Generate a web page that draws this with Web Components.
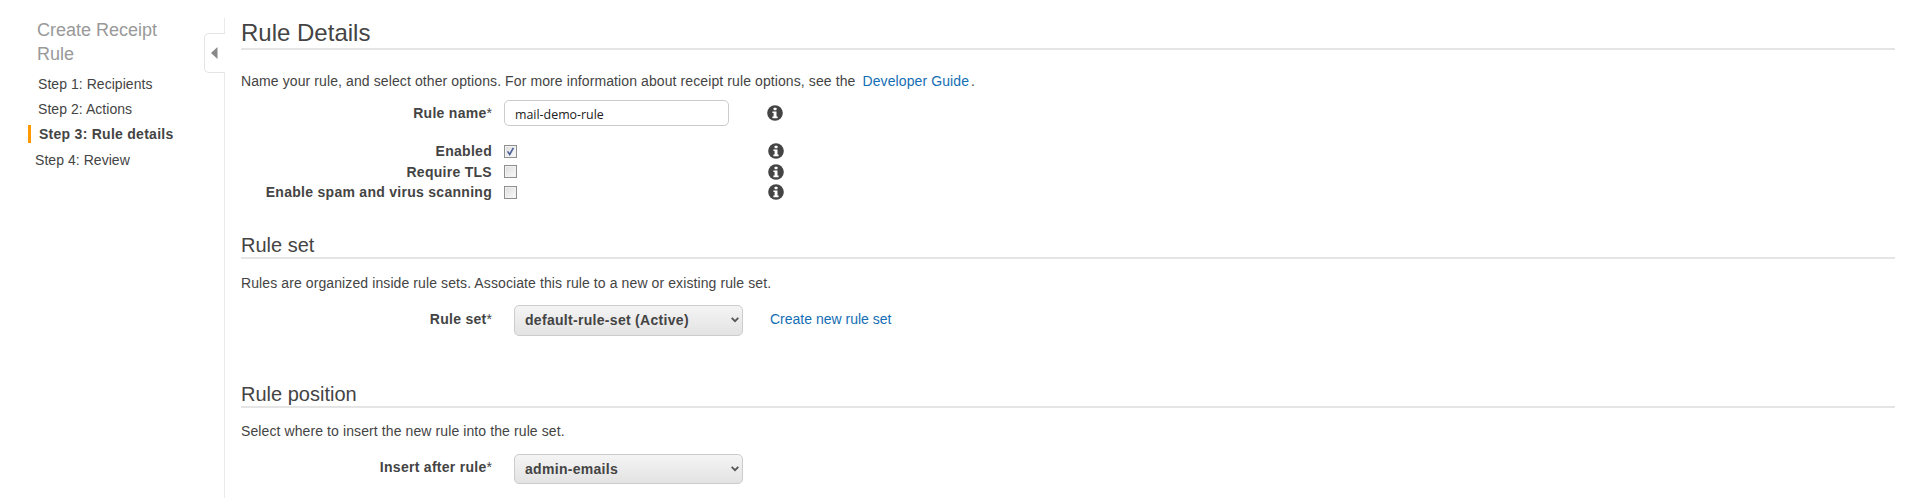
<!DOCTYPE html>
<html>
<head>
<meta charset="utf-8">
<style>
  html, body { margin: 0; height: 100%; background: #fff; overflow: hidden; }
  body { font-family: "Liberation Sans", Arial, sans-serif; font-size: 14px; color: #444; }
</style>
</head>
<body>
<template id="info-tpl">
  <style>
    :host { display: block; width: 16px; height: 16px; }
    svg { display: block; }
  </style>
  <svg width="16" height="16" viewBox="0 0 16 16">
    <circle cx="8" cy="8" r="7.8" fill="#444"/>
    <rect x="6.6" y="2.8" width="2.9" height="2.5" rx=".5" fill="#fff"/>
    <path d="M5.4 6.4h4.1v5.2h1.1v1.7H5.4v-1.7h1.2V8.1H5.4z" fill="#fff"/>
  </svg>
</template>

<script>
class WizardNav extends HTMLElement {
  constructor() {
    super();
    this.attachShadow({ mode: "open" });
    this.shadowRoot.innerHTML = `
      <style>
      :host {
        display: block;
        width: 224px;
        flex: none;
        box-sizing: border-box;
        padding-top: 18px;
      }
      .title {
        margin: 0 0 0 37px;
        width: 140px;
        font-size: 18px;
        font-weight: normal;
        line-height: 24px;
        color: #999;
      }
      .steps {
        list-style: none;
        margin: 9px 0 0 0;
        padding: 0;
      }
      .step {
        height: 18px;
        line-height: 18px;
        margin-bottom: 7.2px;
        padding-left: 38px;
        letter-spacing: .05px;
      }
      .step.current {
        font-weight: bold;
        letter-spacing: .27px;
        padding-left: 39px;
        position: relative;
      }
      .step.current::before {
        content: "";
        position: absolute;
        left: 28px;
        top: 0;
        width: 3px;
        height: 18px;
        background: #f90;
      }
      .step.last { padding-left: 35px; }
      </style>
      <h2 class="title">Create Receipt Rule</h2>
      <ul class="steps">
        <li class="step">Step 1: Recipients</li>
        <li class="step">Step 2: Actions</li>
        <li class="step current">Step 3: Rule details</li>
        <li class="step last">Step 4: Review</li>
      </ul>
    `;
  }
}

class NavToggle extends HTMLElement {
  constructor() {
    super();
    this.attachShadow({ mode: "open" });
    this.shadowRoot.innerHTML = `
      <style>
      :host {
        position: absolute;
        left: 204px;
        top: 33px;
        width: 21px;
        height: 40px;
        box-sizing: border-box;
        background: #fff;
        border: 1px solid #e4e4e4;
        border-right: 0;
        border-radius: 5px 0 0 5px;
        display: flex;
        align-items: center;
        justify-content: center;
      }
      svg { display: block; margin-left: -1px; }
      </style>
      <svg width="7" height="12" viewBox="0 0 7 12"><path d="M6.5 0v12L0 6z" fill="#888"/></svg>
    `;
  }
}

class FormSection extends HTMLElement {
  constructor() {
    super();
    this.attachShadow({ mode: "open" });
    this.shadowRoot.innerHTML = `
      <style>
      :host { display: block; }
      h3 {
        margin: 0;
        font-weight: normal;
        color: #444;
        font-size: var(--head-size, 20px);
        line-height: var(--head-line, 24px);
        padding-bottom: var(--head-pad, 0);
        border-bottom: 2px solid #e5e5e5;
      }
      p {
        margin: 0;
        padding-top: var(--desc-pad, 15px);
        line-height: 18px;
        letter-spacing: .1px;
      }
      </style>
      <h3></h3>
      <p><slot name="desc"></slot></p>
      <slot></slot>
    `;
  }
  connectedCallback() {
    this.shadowRoot.querySelector("h3").textContent = this.getAttribute("heading");
  }
}

class FormRow extends HTMLElement {
  constructor() {
    super();
    this.attachShadow({ mode: "open" });
    this.shadowRoot.innerHTML = `
      <style>
      :host {
        display: grid;
        grid-template-columns: 251px 1fr;
        column-gap: 12px;
        align-items: center;
      }
      .label {
        font-weight: bold;
        letter-spacing: .28px;
        text-align: right;
        white-space: nowrap;
        margin-top: var(--label-shift, 0);
      }
      .req { font-weight: normal; letter-spacing: 0; }
      .control { display: flex; align-items: center; }
      </style>
      <div class="label"><span class="text"></span><span class="req"></span></div>
      <div class="control"><slot></slot></div>
    `;
  }
  connectedCallback() {
    this.shadowRoot.querySelector(".text").textContent = this.getAttribute("label");
    if (this.hasAttribute("required")) this.shadowRoot.querySelector(".req").textContent = "*";
  }
}

class InfoIcon extends HTMLElement {
  constructor() {
    super();
    this.attachShadow({ mode: "open" });
    this.shadowRoot.appendChild(document.getElementById("info-tpl").content.cloneNode(true));
  }
}

class TextField extends HTMLElement {
  constructor() {
    super();
    this.attachShadow({ mode: "open" });
    this.shadowRoot.innerHTML = `
      <style>
      :host { display: block; width: 225px; height: 26px; flex: none; }
      input {
        display: block;
        width: 100%;
        height: 100%;
        box-sizing: border-box;
        border: 1px solid #ccc;
        border-radius: 5px;
        padding: 2px 10px 0;
        font: 12.4px "Open Sans", "Liberation Sans", sans-serif;
        color: #222;
        outline: 0;
      }
      </style>
      <input type="text">
    `;
  }
  connectedCallback() {
    this.shadowRoot.querySelector("input").setAttribute("value", this.getAttribute("value"));
  }
}

class CheckBox extends HTMLElement {
  constructor() {
    super();
    this.attachShadow({ mode: "open" });
    this.shadowRoot.innerHTML = `
      <style>
      :host {
        display: block;
        width: 13px;
        height: 13px;
        box-sizing: border-box;
        flex: none;
        border: 1px solid #8e8f8f;
        background: linear-gradient(135deg, #dcdcdc, #fbfbfb);
        box-shadow: inset 0 0 0 1px #f2f2f2;
      }
      svg { display: block; }
      </style>
      <svg width="11" height="11" viewBox="0 0 11 11"></svg>
    `;
  }
  connectedCallback() {
    if (this.hasAttribute("checked")) {
      this.shadowRoot.querySelector("svg").innerHTML =
        '<path d="M2.6 5.4l2.1 3L8.4 1.9" fill="none" stroke="#4a5f97" stroke-width="1.6"/>';
    }
  }
}

class SelectField extends HTMLElement {
  constructor() {
    super();
    this.attachShadow({ mode: "open" });
    this.shadowRoot.innerHTML = `
      <style>
      :host { display: block; position: relative; width: 229px; flex: none; }
      select {
        display: block;
        appearance: none;
        width: 100%;
        height: 100%;
        box-sizing: border-box;
        border: 1px solid #ccc;
        border-radius: 5px;
        padding: 0 0 0 10px;
        background: linear-gradient(#f4f4f4, #e3e3e3);
        font: bold 14px "Liberation Sans", sans-serif;
        letter-spacing: .3px;
        color: #444;
      }
      svg { position: absolute; right: 4px; top: 50%; margin-top: -3px; }
      </style>
      <select><option></option></select>
      <svg width="8" height="6" viewBox="0 0 8 6"><path d="M.7 .8L4 4.2 7.3 .8" fill="none" stroke="#555" stroke-width="1.8"/></svg>
    `;
  }
  connectedCallback() {
    this.shadowRoot.querySelector("option").textContent = this.getAttribute("value");
  }
}

class ReceiptRulePage extends HTMLElement {
  constructor() {
    super();
    this.attachShadow({ mode: "open" });
    this.shadowRoot.innerHTML = `
      <style>
      :host { display: flex; position: relative; height: 498px; overflow: hidden; }
      a { color: #146eb4; text-decoration: none; }
      .content {
        flex: 1;
        min-width: 0;
        margin-top: 18px;
        border-left: 1px solid #eaeaea;
        padding: 0 24px 0 16px;
      }
      .details { --head-size: 24px; --head-line: 30px; --desc-pad: 22px; }
      .guide { margin-left: 3px; margin-right: 2px; }
      .name-row { margin-top: 10px; }
      .name-row, .check-row { grid-template-columns: 251px 225px 1fr; }
      .checks { margin-top: 15px; display: grid; }
      .check-row { height: 20.6px; }
      .tip { margin-left: 38px; }
      .tip-wide { margin-left: 251px; }
      .set-section { margin-top: 30px; }
      .set-row { margin-top: 13px; height: 31px; --label-shift: -3px; }
      .set-row select-field { margin-left: 10px; height: 31px; }
      .set-row a { margin-left: 27px; margin-top: -3px; }
      .pos-section { margin-top: 46px; --desc-pad: 14px; }
      .pos-row { margin-top: 14px; height: 30px; --label-shift: -3px; }
      .pos-row select-field { margin-left: 10px; height: 30px; }
      </style>
      <wizard-nav></wizard-nav>
      <nav-toggle></nav-toggle>
      <div class="content">
        <form-section class="details" heading="Rule Details">
          <span slot="desc">Name your rule, and select other options. For more information about receipt rule options, see the <a class="guide" href="#">Developer Guide</a>.</span>
          <form-row class="name-row" label="Rule name" required>
            <text-field value="mail-demo-rule"></text-field>
            <info-icon class="tip"></info-icon>
          </form-row>
          <div class="checks">
            <form-row class="check-row" label="Enabled"><check-box checked></check-box><info-icon class="tip-wide"></info-icon></form-row>
            <form-row class="check-row" label="Require TLS"><check-box></check-box><info-icon class="tip-wide"></info-icon></form-row>
            <form-row class="check-row" label="Enable spam and virus scanning"><check-box></check-box><info-icon class="tip-wide"></info-icon></form-row>
          </div>
        </form-section>
        <form-section class="set-section" heading="Rule set">
          <span slot="desc">Rules are organized inside rule sets. Associate this rule to a new or existing rule set.</span>
          <form-row class="set-row" label="Rule set" required>
            <select-field value="default-rule-set (Active)"></select-field>
            <a href="#">Create new rule set</a>
          </form-row>
        </form-section>
        <form-section class="pos-section" heading="Rule position">
          <span slot="desc">Select where to insert the new rule into the rule set.</span>
          <form-row class="pos-row" label="Insert after rule" required>
            <select-field value="admin-emails"></select-field>
          </form-row>
        </form-section>
      </div>
    `;
  }
}

customElements.define("wizard-nav", WizardNav);
customElements.define("nav-toggle", NavToggle);
customElements.define("form-section", FormSection);
customElements.define("form-row", FormRow);
customElements.define("info-icon", InfoIcon);
customElements.define("text-field", TextField);
customElements.define("check-box", CheckBox);
customElements.define("select-field", SelectField);
customElements.define("receipt-rule-page", ReceiptRulePage);
</script>
<receipt-rule-page></receipt-rule-page>
</body>
</html>
